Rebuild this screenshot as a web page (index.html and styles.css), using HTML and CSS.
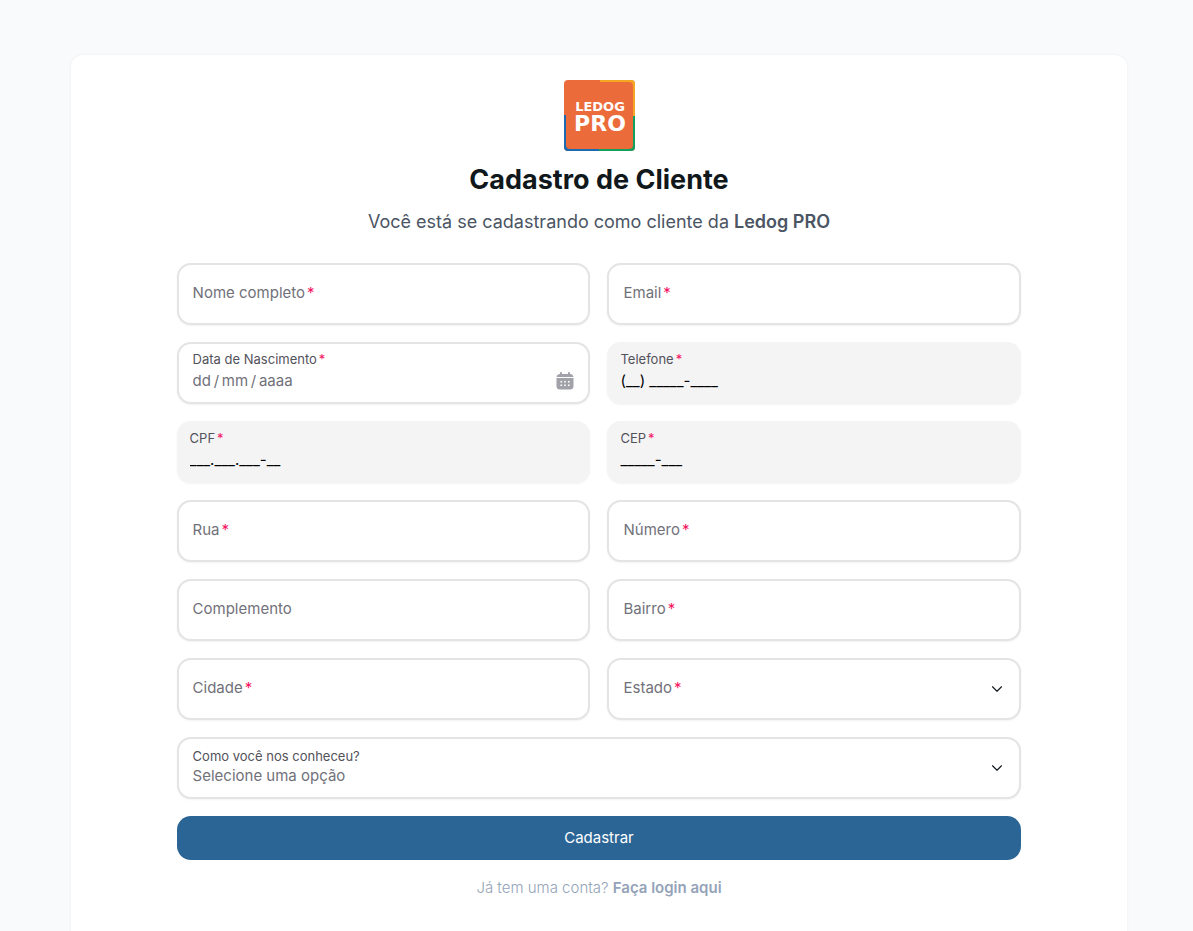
FILE: index.html
```html
<!DOCTYPE html>
<html lang="pt-BR">
<head>
  <meta charset="UTF-8">
  <meta name="viewport" content="width=device-width, initial-scale=1.0">
  <title>Cadastro de Cliente</title>
  <link rel="stylesheet" href="styles.css">
</head>
<body>
  <main class="card">
    <header class="card-header">
      <svg class="logo" viewBox="0 0 71 71" role="img" aria-label="Ledog PRO">
        <rect width="71" height="71" rx="4" fill="#ec6b3b"/>
        <path d="M36 0H67a4 4 0 0 1 4 4V36H69V6a4 4 0 0 0-4-4H36Z" fill="#f5a623"/>
        <path d="M71 36V67a4 4 0 0 1-4 4H35V69H65a4 4 0 0 0 4-4V36Z" fill="#12a05c"/>
        <path d="M0 35V67a4 4 0 0 0 4 4H35V69H6a4 4 0 0 1-4-4V35Z" fill="#1c6bb0"/>
        <text class="logo-small" x="36" y="31" text-anchor="middle">LEDOG</text>
        <text class="logo-big" x="36" y="51" text-anchor="middle">PRO</text>
      </svg>
      <h1>Cadastro de Cliente</h1>
      <p class="subtitle">Você está se cadastrando como cliente da <strong>Ledog PRO</strong></p>
    </header>

    <form class="form">
      <div class="field">
        <label class="required" for="nome">Nome completo</label>
        <input type="text" id="nome" name="nome" required>
      </div>
      <div class="field">
        <label class="required" for="email">Email</label>
        <input type="email" id="email" name="email" required>
      </div>

      <div class="field stacked">
        <label class="required" for="nascimento">Data de Nascimento</label>
        <div class="date-row">
          <input type="text" id="nascimento" name="nascimento" inputmode="numeric" placeholder="dd&#8201;/&#8201;mm&#8201;/&#8201;aaaa" required>
          <svg class="calendar" viewBox="0 0 18 18" aria-hidden="true">
            <path d="M4 1a1 1 0 0 1 2 0v1h6V1a1 1 0 0 1 2 0v1c2 0 3 1 3.500 3H.5C1 3 2 2 4 2Z" fill="#a1a1aa"/>
            <path d="M.5 6h17V14c0 2.500-1.200 3.500-3.500 3.500H4C1.700 17.500.5 16.500.5 14Z" fill="#a1a1aa"/>
            <path d="M4.500 9h1.600v1.600H4.500zM8.200 9h1.600v1.600H8.200zM12 9h1.600v1.600H12zM4.500 12.500h1.600v1.600H4.500zM8.200 12.500h1.600v1.600H8.200zM12 12.500h1.600v1.600H12z" fill="#fff"/>
          </svg>
        </div>
      </div>
      <div class="field stacked filled">
        <label class="required" for="telefone">Telefone</label>
        <input type="tel" id="telefone" name="telefone" value="(__) _____-____" required>
      </div>

      <div class="field stacked filled">
        <label class="required" for="cpf">CPF</label>
        <input type="text" id="cpf" name="cpf" value="___.___.___-__" required>
      </div>
      <div class="field stacked filled">
        <label class="required" for="cep">CEP</label>
        <input type="text" id="cep" name="cep" value="_____-___" required>
      </div>

      <div class="field">
        <label class="required" for="rua">Rua</label>
        <input type="text" id="rua" name="rua" required>
      </div>
      <div class="field">
        <label class="required" for="numero">Número</label>
        <input type="text" id="numero" name="numero" required>
      </div>

      <div class="field">
        <label for="complemento">Complemento</label>
        <input type="text" id="complemento" name="complemento">
      </div>
      <div class="field">
        <label class="required" for="bairro">Bairro</label>
        <input type="text" id="bairro" name="bairro" required>
      </div>

      <div class="field">
        <label class="required" for="cidade">Cidade</label>
        <input type="text" id="cidade" name="cidade" required>
      </div>
      <div class="field">
        <label class="required" for="estado">Estado</label>
        <select id="estado" name="estado" required>
          <option value=""></option>
          <option>PR</option>
          <option>RJ</option>
          <option>SP</option>
        </select>
        <svg class="chevron" viewBox="0 0 24 24" aria-hidden="true"><path d="m6 9 6 6 6-6"/></svg>
      </div>

      <div class="field stacked tight wide">
        <label for="origem">Como você nos conheceu?</label>
        <select id="origem" name="origem">
          <option value="">Selecione uma opção</option>
          <option>Indicação</option>
          <option>Instagram</option>
          <option>Google</option>
        </select>
        <svg class="chevron" viewBox="0 0 24 24" aria-hidden="true"><path d="m6 9 6 6 6-6"/></svg>
      </div>

      <button type="submit" class="submit wide">Cadastrar</button>
    </form>

    <p class="login">Já tem uma conta? <a href="#login">Faça login aqui</a></p>
  </main>
</body>
</html>
```
FILE: styles.css
```css
* {
  box-sizing: border-box;
}
body {
  margin: 0;
  padding: 55px 66px 0 71px;
  background: #f8fafc;
  color: #11181c;
  font-family: Inter, sans-serif;
  font-size: 15px;
  line-height: 24px;
}
.card {
  padding: 25px 0 48px;
  background: #fff;
  border-radius: 12px;
  box-shadow: 0 0 3px rgba(0, 0, 0, 0.06);
}
.card-header {
  display: flex;
  flex-direction: column;
  align-items: center;
  text-align: center;
}
.logo {
  width: 71px;
  height: 71px;
}
.logo text {
  fill: #fff;
  font-family: "DejaVu Sans", sans-serif;
  font-weight: 700;
}
.logo-small {
  font-size: 13px;
}
.logo-big {
  font-size: 22px;
}
h1 {
  margin: 11px 0 10px;
  font-size: 27px;
  font-weight: 700;
  line-height: 36px;
}
.subtitle {
  margin: 0;
  color: #4b5563;
  font-size: 18px;
  line-height: 28px;
}
.subtitle strong {
  font-weight: 600;
}

/* form */
.form {
  display: grid;
  grid-template-columns: 1fr 1fr;
  gap: 17px;
  width: 80%;
  margin: 27px auto 0;
}
.wide {
  grid-column: 1 / -1;
}
.field {
  position: relative;
  display: flex;
  align-items: center;
  min-height: 62px;
  padding: 0 14px 2px;
  background: #fff;
  border: 2px solid #e4e4e7;
  border-radius: 14px;
  box-shadow: 0 1px 2px rgba(0, 0, 0, 0.05);
}
.field label {
  flex: none;
  color: #71717a;
}
.required::after {
  content: "*";
  margin-left: 2px;
  color: #f31260;
}
.field input,
.field select {
  flex: 1;
  width: 100%;
  min-width: 0;
  height: 24px;
  padding: 0;
  border: 0;
  outline: none;
  background: none;
  color: #000;
  font: inherit;
  appearance: none;
}
.field select,
.field input::placeholder {
  color: #71717a;
}
.field.stacked {
  flex-direction: column;
  align-items: stretch;
  justify-content: center;
  padding-bottom: 5px;
}
.stacked label {
  color: #52525b;
  font-size: 13px;
  line-height: 20px;
}
.stacked input,
.stacked select {
  flex: none;
}
.tight select {
  height: 20px;
  line-height: 20px;
}
.field.filled {
  padding: 0 13px 5px;
  background: #f4f4f5;
  border: 0;
}
.date-row {
  display: flex;
  align-items: center;
}
.date-row input {
  flex: 1;
}
.calendar {
  width: 18px;
  height: 18px;
}
.chevron {
  position: absolute;
  top: 50%;
  right: 13px;
  width: 18px;
  height: 18px;
  margin-top: -9px;
  fill: none;
  stroke: #11181c;
  stroke-width: 1.5;
  stroke-linecap: round;
  stroke-linejoin: round;
  pointer-events: none;
}
.submit {
  height: 44px;
  border: 0;
  border-radius: 14px;
  background: #2b6596;
  color: #fff;
  font: inherit;
  cursor: pointer;
}
.login {
  margin: 16px 0 0;
  color: #94a3b8;
  font-weight: 300;
  text-align: center;
}
.login a {
  color: #94a3b8;
  font-weight: 600;
  text-decoration: none;
}
```
